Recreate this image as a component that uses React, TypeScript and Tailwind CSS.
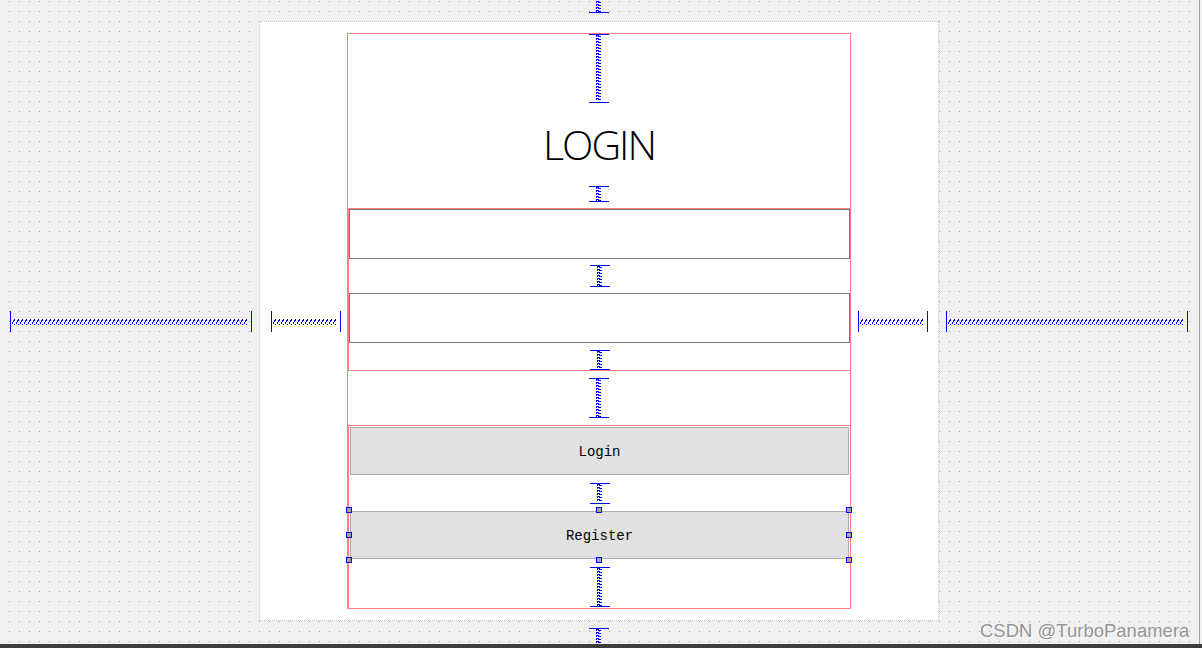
import React from 'react';

const BLUE = '#0000ff';

// vertical spacer spring (Qt Designer style)
const VSpring = ({ h, top = true, bottom = true }: { h: number; top?: boolean; bottom?: boolean }) => {
  let d = '';
  for (let y = 1; y + 2 <= h - 1; y += 3) d += `M7 ${y}L12 ${y + 2}M7 ${y + 1}h1`;
  return (
    <svg width={20} height={h} className="block shrink-0" shapeRendering="crispEdges">
      <path d={d} stroke={BLUE} strokeWidth={1} fill="none" />
      {top && <rect x={0} y={0} width={20} height={1} fill={BLUE} />}
      {bottom && <rect x={0} y={h - 1} width={20} height={1} fill={BLUE} />}
    </svg>
  );
};

// horizontal spacer spring
const HSpring = ({ w }: { w: number }) => {
  let d = '';
  for (let x = 2; x + 3 <= w - 2; x += 4) d += `M${x} 13L${x + 3} 8M${x + 2} 13h1`;
  return (
    <svg width={w} height={21} className="block shrink-0" shapeRendering="crispEdges">
      <path d={d} stroke={BLUE} strokeWidth={1} fill="none" />
      <rect x={0} y={0} width={1} height={21} fill={BLUE} />
      <rect x={w - 1} y={0} width={1} height={21} fill={BLUE} />
    </svg>
  );
};

const Handle = ({ className }: { className: string }) => (
  <div className={`absolute w-[6px] h-[6px] border border-[#0000ff] bg-[#a4a4a4] ${className}`} />
);

const LineEdit = () => <div className="h-[50px] w-full border border-[#7a7a7a] bg-white" />;

const PushButton = ({ label, selected = false }: { label: string; selected?: boolean }) => (
  <div className="relative h-[50px] w-full p-px">
    <div className="flex h-full w-full items-center justify-center border border-[#adadad] bg-[#e1e1e1] pt-[3px] text-[14px] text-black font-['Liberation_Mono',monospace]">
      {label}
    </div>
    {selected && (
      <>
        <Handle className="left-[-3px] top-[-3px]" />
        <Handle className="left-[247px] top-[-3px]" />
        <Handle className="left-[497px] top-[-3px]" />
        <Handle className="left-[-3px] top-[22px]" />
        <Handle className="left-[497px] top-[22px]" />
        <Handle className="left-[-3px] top-[47px]" />
        <Handle className="left-[247px] top-[47px]" />
        <Handle className="left-[497px] top-[47px]" />
      </>
    )}
  </div>
);

export default function App() {
  return (
    <div className="relative flex h-[648px] w-[1202px] overflow-hidden bg-[#f0f0f0] [background-image:radial-gradient(circle_at_0.5px_0.5px,#9a9a9a_0.75px,transparent_0.76px)] [background-size:10px_10px] [background-position:9px_1px]">
      <div className="flex h-full w-[1199px] flex-col">
        {/* top spacer */}
        <div className="h-[21px] shrink-0 pl-[589px]">
          <VSpring h={13} top={false} />
        </div>

        {/* middle row */}
        <div className="flex h-[600px] shrink-0 items-center">
          <div className="flex w-[259px] shrink-0 items-center pl-[10px]">
            <HSpring w={242} />
          </div>

          {/* form canvas */}
          <div className="flex h-[600px] w-[680px] shrink-0 items-center border border-dotted border-[#c4c4c4] bg-white">
            <div className="ml-[11px]">
              <HSpring w={70} />
            </div>

            <div className="ml-[6px] flex h-[576px] w-[504px] shrink-0 flex-col border border-[#ff8080]">
              <div className="flex justify-center">
                <VSpring h={69} />
              </div>
              <div className="flex h-[83px] items-center justify-center text-[41px] font-light tracking-[-2px] text-black font-['Open_Sans',sans-serif]">
                LOGIN
              </div>
              <div className="flex justify-center">
                <VSpring h={16} />
              </div>
              <div className="h-[6px]" />

              {/* line edit group */}
              <div className="mr-[-1px] flex h-[163px] flex-col border border-[#ff8080]">
                <LineEdit />
                <div className="flex justify-center pt-[6px] pb-[6px]">
                  <VSpring h={22} />
                </div>
                <LineEdit />
                <div className="flex justify-center pt-[7px]">
                  <VSpring h={20} />
                </div>
              </div>

              <div className="flex justify-center py-[7px]">
                <VSpring h={40} />
              </div>

              {/* button group */}
              <div className="mr-[-1px] mb-[-1px] flex h-[184px] flex-col border border-[#ff8080]">
                <PushButton label="Login" />
                <div className="flex justify-center pt-[7px] pb-[6px]">
                  <VSpring h={21} />
                </div>
                <PushButton label="Register" selected />
                <div className="flex justify-center pt-[7px]">
                  <VSpring h={40} />
                </div>
              </div>
            </div>

            <div className="ml-[7px]">
              <HSpring w={70} />
            </div>
          </div>

          <div className="flex flex-1 items-center pl-[7px]">
            <HSpring w={242} />
          </div>
        </div>

        {/* bottom spacer */}
        <div className="h-[23px] shrink-0 overflow-hidden pt-[7px] pl-[589px]">
          <VSpring h={16} bottom={false} />
        </div>
        <div className="h-[4px] shrink-0 bg-[#3c3c3c]" />
      </div>
      <div className="flex h-full w-[3px] flex-col">
        <div className="flex flex-1">
          <div className="w-px bg-[#a0a0a0]" />
          <div className="flex-1 bg-[#f0f0f0]" />
        </div>
        <div className="h-[4px] bg-[#3c3c3c]" />
      </div>

      <div className="absolute left-[980px] top-[622px] text-[18.5px] leading-none text-[#959595] [text-shadow:1px_1px_1px_#ffffff] font-['Liberation_Sans',Arial,sans-serif]">
        CSDN @TurboPanamera
      </div>
    </div>
  );
}
